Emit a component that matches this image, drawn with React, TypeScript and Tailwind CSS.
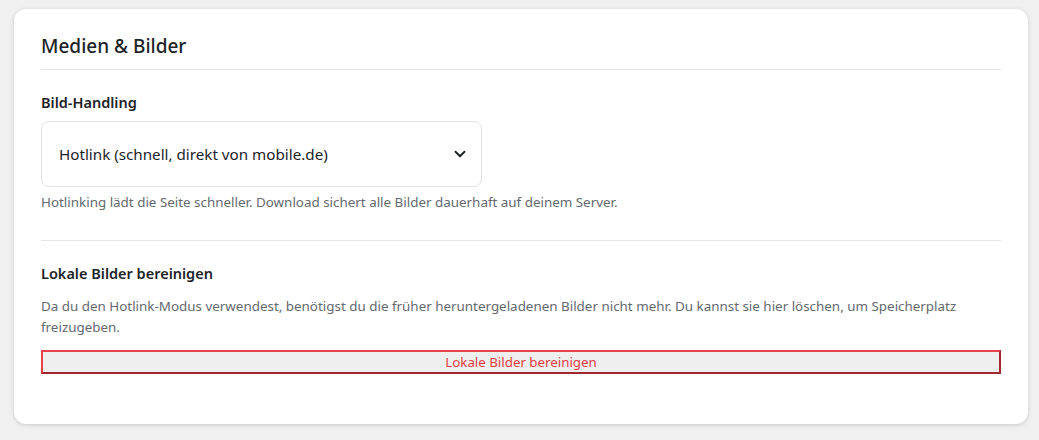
import { ChevronDown } from "lucide-react";

export default function App() {
  return (
    <div
      className="min-h-[440px] bg-[#f0f0f1] pl-[14px] pr-[11px] pt-[9px]"
      style={{ fontFamily: '"Noto Sans", "Open Sans", sans-serif' }}
    >
      <div className="rounded-xl bg-white px-[27px] pb-[50px] pt-[23px] shadow-[0_1px_4px_rgba(0,0,0,0.16)]">
        <h2 className="border-b border-[#e4e4e7] pb-[9px] text-[19px] font-medium leading-[28px] text-[#1d2327]">
          Medien &amp; Bilder
        </h2>

        <div className="border-b border-[#e4e4e7] pb-[29px] pt-[22px]">
          <label className="block text-[14.5px] font-semibold leading-5 text-[#1d2327]">
            Bild-Handling
          </label>
          <div className="mt-[9px] flex h-[66px] w-[441px] items-center justify-between rounded-lg border border-[#e4e4e7] pl-[17px] pr-[12px]">
            <span className="text-[15.2px] text-[#1d2327]">
              Hotlink (schnell, direkt von mobile.de)
            </span>
            <ChevronDown className="h-[18px] w-[18px] text-[#1d2327]" strokeWidth={2.5} />
          </div>
          <p className="mt-[6px] text-[13.4px] leading-[18px] text-[#646970]">
            Hotlinking lädt die Seite schneller. Download sichert alle Bilder dauerhaft auf deinem Server.
          </p>
        </div>

        <div className="pt-[22px]">
          <h3 className="text-[14.5px] font-semibold leading-5 text-[#1d2327]">
            Lokale Bilder bereinigen
          </h3>
          <p className="mt-[13px] text-[13.4px] leading-[21px] text-[#646970]">
            Da du den Hotlink-Modus verwendest, benötigst du die früher heruntergeladenen Bilder nicht mehr. Du kannst sie hier löschen, um Speicherplatz freizugeben.
          </p>
          <button
            type="button"
            className="mt-[12px] block h-[24px] w-full border-2 border-b-[#a1282e] border-l-[#e8434a] border-r-[#a1282e] border-t-[#e8434a] bg-[#efefef] text-[13.3px] leading-[20px] text-[#e03c44]"
          >
            Lokale Bilder bereinigen
          </button>
        </div>
      </div>
    </div>
  );
}
